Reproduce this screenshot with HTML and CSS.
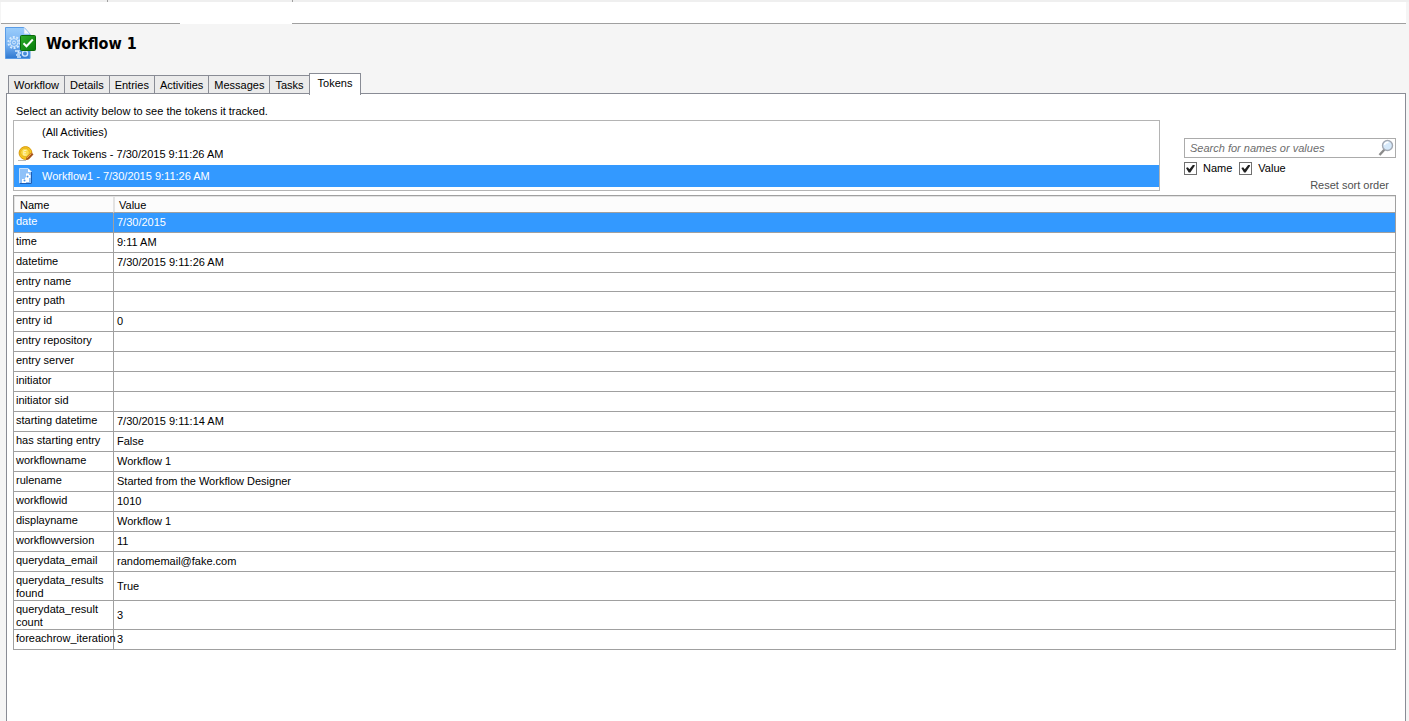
FILE: index.html
```html
<!DOCTYPE html>
<html lang="en">
<head>
  <meta charset="UTF-8">
  <meta name="viewport" content="width=device-width, initial-scale=1.0">
  <title>Workflow 1 - Tokens</title>
  <link rel="stylesheet" href="styles.css">
</head>
<body>
  <div class="strip">
    <span class="strip-tab strip-tab-first"></span>
    <span class="strip-tab"></span>
  </div>
  <div class="toolbar">
    <span class="toolbar-line toolbar-line-start"></span>
    <span class="toolbar-gap"></span>
    <span class="toolbar-line toolbar-line-end"></span>
  </div>

  <header class="title-bar">
    <svg class="title-icon" width="32" height="34" viewBox="0 0 32 34">
      <defs>
        <linearGradient id="page-fill" x1="0" y1="0" x2="0" y2="1">
          <stop offset="0" stop-color="#9bcdfb"/>
          <stop offset="0.55" stop-color="#77b2f2"/>
          <stop offset="1" stop-color="#2f78d0"/>
        </linearGradient>
        <linearGradient id="check-fill" x1="0" y1="0" x2="1" y2="1">
          <stop offset="0" stop-color="#2fae2b"/>
          <stop offset="1" stop-color="#067a08"/>
        </linearGradient>
      </defs>
      <path d="M0.5 1.5H19L25 8V32.500H0.5Z" fill="url(#page-fill)" stroke="#5a9ce6"/>
      <path d="M19 1.500V8H25Z" fill="#f1f7fe" stroke="#a5c8ee" stroke-width="0.6"/>
      <circle cx="9" cy="16.500" r="5.600" fill="none" stroke="#d5eafe" stroke-width="2" stroke-dasharray="2 1.500"/>
      <circle cx="9" cy="16.500" r="4" fill="none" stroke="#d5eafe"/>
      <circle cx="9" cy="16.500" r="1.500" fill="none" stroke="#d5eafe"/>
      <path d="M10 25h4l-1 2h3M11 29h4M12 31h4" fill="none" stroke="#d5eafe" stroke-width="1.300"/>
      <circle cx="20" cy="27.500" r="2.600" fill="none" stroke="#d5eafe" stroke-width="1.300"/>
      <rect x="15.500" y="9.500" width="15" height="15" rx="1" fill="url(#check-fill)" stroke="#0a6a0a"/>
      <path d="M18.500 17.200L21.500 20.200L27.800 13.500" fill="none" stroke="#fff" stroke-width="2"/>
    </svg>
    <h1>Workflow 1</h1>
  </header>

  <nav class="tabs" role="tablist">
    <button class="tab" role="tab">Workflow</button>
    <button class="tab" role="tab">Details</button>
    <button class="tab" role="tab">Entries</button>
    <button class="tab" role="tab">Activities</button>
    <button class="tab" role="tab">Messages</button>
    <button class="tab" role="tab">Tasks</button>
    <button class="tab active" role="tab" aria-selected="true">Tokens</button>
  </nav>

  <main class="panel">
    <p class="hint">Select an activity below to see the tokens it tracked.</p>

    <div class="filters">
      <div class="activities">
        <button class="activity"><span class="activity-icon"></span>(All Activities)</button>
        <button class="activity">
          <svg class="activity-icon" width="16" height="16" viewBox="0 0 16 16">
            <path d="M0 14.500H8" stroke="#b9b9b9"/>
            <circle cx="7.500" cy="7" r="6.400" fill="#f7c81e" stroke="#d99a0c"/>
            <circle cx="7" cy="6.500" r="4.300" fill="#fbdc4c" stroke="#e0a81a" stroke-width="0.8"/>
            <path d="M8.500 4.500H5.800V9H8.500M5.800 6.700H8" fill="none" stroke="#fff3b8"/>
            <path d="M8 14L8.500 11.500L13.500 6.500L15.500 8.500L10.500 13.500Z" fill="#a5531c"/>
            <path d="M9 12L13.500 7.500" stroke="#eda04a"/>
          </svg>
          Track Tokens - 7/30/2015 9:11:26 AM
        </button>
        <button class="activity selected">
          <svg class="activity-icon" width="16" height="16" viewBox="0 0 16 16">
            <path d="M1.500 0.500H10L13.500 4V15.500H1.500Z" fill="#8fc1f8" stroke="#c6e0fc"/>
            <path d="M1.500 15.500H13.500V4" fill="none" stroke="#1c5cb4"/>
            <path d="M10 0.500V4H13.500Z" fill="#fff"/>
            <path d="M8 5.500h3v1.500h1.500v3h-1.500v4h-3v1h-4v-4h3v-1.500h1z" fill="#fff"/>
            <circle cx="9.500" cy="8.500" r="1" fill="#4e94e4"/>
            <circle cx="6.500" cy="12.500" r="1" fill="#4e94e4"/>
          </svg>
          Workflow1 - 7/30/2015 9:11:26 AM
        </button>
      </div>

      <form class="search">
        <div class="search-box">
          <input class="search-input" type="text" placeholder="Search for names or values" aria-label="Search for names or values">
          <svg class="search-icon" width="16" height="18" viewBox="0 0 16 18">
            <path d="M1.500 16L6.500 10.500" stroke="#8b8b8b" stroke-width="2.400"/>
            <circle cx="9.500" cy="6.500" r="5" fill="#d6e9fa" stroke="#a3a9b3" stroke-width="1.400"/>
            <path d="M6.500 6a3.200 3.200 0 0 1 4-2.500" fill="none" stroke="#fff" stroke-width="1.500"/>
          </svg>
        </div>
        <div class="search-options">
          <label class="option"><input class="check" type="checkbox" checked>Name</label>
          <label class="option"><input class="check" type="checkbox" checked>Value</label>
        </div>
        <a class="reset" href="#">Reset sort order</a>
      </form>
    </div>

    <table class="tokens">
      <thead>
        <tr><th class="name">Name</th><th>Value</th></tr>
      </thead>
      <tbody>
        <tr class="selected"><td>date</td><td>7/30/2015</td></tr>
        <tr><td>time</td><td>9:11 AM</td></tr>
        <tr><td>datetime</td><td>7/30/2015 9:11:26 AM</td></tr>
        <tr class="short"><td>entry name</td><td></td></tr>
        <tr><td>entry path</td><td></td></tr>
        <tr><td>entry id</td><td>0</td></tr>
        <tr><td>entry repository</td><td></td></tr>
        <tr><td>entry server</td><td></td></tr>
        <tr><td>initiator</td><td></td></tr>
        <tr><td>initiator sid</td><td></td></tr>
        <tr><td>starting datetime</td><td>7/30/2015 9:11:14 AM</td></tr>
        <tr><td>has starting entry</td><td>False</td></tr>
        <tr><td>workflowname</td><td>Workflow 1</td></tr>
        <tr><td>rulename</td><td>Started from the Workflow Designer</td></tr>
        <tr><td>workflowid</td><td>1010</td></tr>
        <tr><td>displayname</td><td>Workflow 1</td></tr>
        <tr><td>workflowversion</td><td>11</td></tr>
        <tr><td>querydata_email</td><td>randomemail@fake.com</td></tr>
        <tr><td>querydata_results<br>found</td><td>True</td></tr>
        <tr><td>querydata_result<br>count</td><td>3</td></tr>
        <tr><td>foreachrow_iteration</td><td>3</td></tr>
      </tbody>
    </table>
  </main>
</body>
</html>
```
FILE: styles.css
```css
* {
  box-sizing: border-box;
}
body {
  display: flex;
  flex-direction: column;
  min-height: 100vh;
  margin: 0;
  background-color: #f5f5f5;
  color: #000;
  font-family: "Liberation Sans", Arial, sans-serif;
  font-size: 11px;
  line-height: 13px;
}
button,
input {
  font: inherit;
  color: inherit;
}

/* bottom edge of the window tabs */
.strip {
  display: flex;
  height: 2px;
  background-color: #efefef;
}
.strip-tab {
  width: 185px;
  border-right: 1px solid #a0a0a0;
}
.strip-tab-first {
  width: 108px;
}
.toolbar {
  display: flex;
  height: 22px;
  margin: 0 3px 0 1px;
  background-color: #fff;
}
.toolbar-line {
  border-bottom: 1px solid #a0a0a0;
}
.toolbar-line-start {
  width: 179px;
}
.toolbar-gap {
  width: 112px;
}
.toolbar-line-end {
  flex: 1;
}

.title-bar {
  display: flex;
  align-items: center;
  gap: 9px;
  padding: 2px 5px 0;
}
h1 {
  margin: 0;
  padding-top: 2px;
  font-family: "DejaVu Sans Condensed", "DejaVu Sans", Tahoma, sans-serif;
  font-size: 16px;
  font-stretch: condensed;
  line-height: 20px;
}

.tabs {
  display: flex;
  align-items: flex-end;
  margin: 13px 8px 0;
}
.tab {
  height: 18px;
  padding: 1px 5px 0;
  border: 1px solid #898c95;
  border-right-width: 0;
  border-bottom: 0;
  background-color: #ebebeb;
}
.tab.active {
  z-index: 1;
  height: 22px;
  margin-bottom: -2px;
  padding: 0 8px 2px;
  border-right-width: 1px;
  background-color: #fff;
}

.panel {
  flex: 1;
  margin: 0 3px 0 6px;
  padding: 11px 9px 0 6px;
  border: 1px solid #898c95;
  border-bottom: 0;
  background-color: #fff;
}
.hint {
  margin: 0 3px 2px;
}
.filters {
  display: flex;
  align-items: flex-start;
  gap: 24px;
}
.activities {
  flex: 1;
  padding-bottom: 3px;
  border: 1px solid #b4b4b4;
}
.activity {
  display: flex;
  align-items: center;
  gap: 8px;
  width: 100%;
  height: 22px;
  padding: 0 4px;
  border: 0;
  background: none;
}
.activity-icon {
  width: 16px;
}
.activity.selected,
.selected {
  background-color: #3399ff;
  color: #fff;
}

.search {
  display: flex;
  flex-direction: column;
  width: 212px;
  padding-top: 18px;
}
.search-box {
  display: flex;
  align-items: center;
  height: 20px;
  padding: 0 1px 0 5px;
  border: 1px solid #ababab;
}
.search-input {
  flex: 1;
  min-width: 0;
  padding: 0;
  border: 0;
  outline: 0;
  background: none;
}
.search-input::placeholder {
  color: #6d6d6d;
  font-style: italic;
  opacity: 1;
}
.search-options {
  display: flex;
  gap: 7px;
  margin-top: 4px;
}
.option {
  display: flex;
  align-items: center;
  gap: 6px;
}
.check {
  display: grid;
  place-items: center;
  width: 13px;
  height: 13px;
  margin: 0;
  border: 1px solid #707070;
  background-color: #fff;
  appearance: none;
}
.check:checked::after {
  content: "";
  width: 9px;
  height: 8px;
  background-color: #212121;
  clip-path: polygon(0 45%, 20% 35%, 38% 60%, 80% 0, 100% 12%, 48% 100%, 30% 100%);
}
.reset {
  align-self: flex-end;
  margin: 4px 7px 0 0;
  color: #505050;
  text-decoration: none;
}

.tokens {
  width: 100%;
  margin-top: 3px;
  border: 1px solid #a0a0a0;
  border-width: 1px 0 0 1px;
  border-spacing: 0;
  table-layout: fixed;
}
.tokens th {
  height: 17px;
  padding: 2px 5px 0;
  border: 1px solid #a0a0a0;
  border-width: 0 1px 1px 0;
  background-color: #fcfcfc;
  box-shadow: inset 1px 1px #e3e3e3;
  font-weight: normal;
  text-align: left;
}
.tokens th.name {
  width: 100px;
  padding-left: 6px;
  border-right-color: #e3e3e3;
}
.tokens td {
  height: 20px;
  padding: 0 3px;
  border: 1px solid #a0a0a0;
  border-width: 0 1px 1px 0;
}
.tokens td:first-child {
  padding: 2px 0 0 2px;
  vertical-align: top;
}
.tokens .short td {
  height: 19px;
}
```
